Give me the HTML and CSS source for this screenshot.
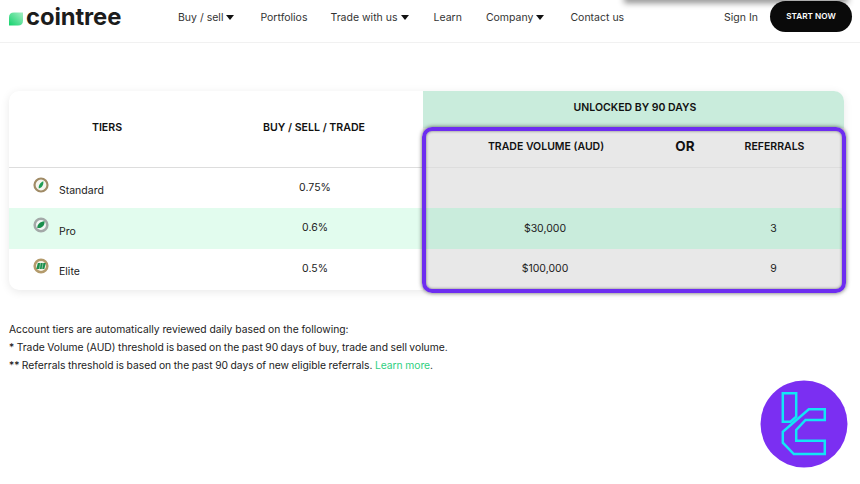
FILE: index.html
```html
<!DOCTYPE html>
<html lang="en">
<head>
<meta charset="utf-8">
<title>Cointree tiers</title>
<link rel="stylesheet" href="styles.css">
</head>
<body>
<header class="nav">
  <a class="logo">
    <svg class="logo-leaf" width="14" height="14" viewBox="0 0 14 14"><defs><linearGradient id="lg" x1="1" y1="0" x2="0" y2="1"><stop offset="0" stop-color="#a5eec4"/><stop offset="1" stop-color="#12d26c"/></linearGradient></defs><path d="M5 0.500H14V8.500Q14 13.500 9 13.500H0V5.500Q0 0.500 5 0.500Z" fill="url(#lg)"/></svg>
    <span class="logo-text">cointree</span>
  </a>
  <nav class="menu">
    <span class="menu-item m-buy">Buy / sell<i class="caret"></i></span>
    <span class="menu-item m-port">Portfolios</span>
    <span class="menu-item m-trade">Trade with us<i class="caret"></i></span>
    <span class="menu-item m-learn">Learn</span>
    <span class="menu-item m-comp">Company<i class="caret"></i></span>
    <span class="menu-item">Contact us</span>
  </nav>
  <span class="signin">Sign In</span>
  <span class="start">START NOW</span>
</header>
<div class="drop-shadow"></div>

<main class="content">
  <section class="tiers">
    <div class="cell head col-a">TIERS</div>
    <div class="cell head col-b">BUY / SELL / TRADE</div>
    <div class="unlocked">UNLOCKED BY 90 DAYS</div>
    <div class="cell sub c-vol">TRADE VOLUME (AUD)</div>
    <div class="cell sub c-or">OR</div>
    <div class="cell sub c-ref">REFERRALS</div>

    <div class="tier"><svg class="medal" width="16" height="16" viewBox="0 0 16 16"><circle cx="8" cy="8" r="6.500" fill="#f6f6f0" stroke="#a08b66" stroke-width="2.200"/><path d="M5.800 11.500C5.200 8.500 7.300 5.500 10.300 4.300C10.800 7.500 9.200 10.800 5.800 11.500Z" fill="#1f9d55"/></svg><span>Standard</span></div>
    <div class="rate">0.75%</div>
    <div class="grey"></div><div class="grey"></div><div class="grey"></div>

    <div class="mint tier"><svg class="medal" width="16" height="16" viewBox="0 0 16 16"><circle cx="8" cy="8" r="6.300" fill="#f2f6f4" stroke="#a3a9a8" stroke-width="2.600"/><path d="M4.300 11C4 7.800 7 4.500 11.500 4.300C12 8.300 9 11.800 4.300 11Z" fill="#1b8f4d"/></svg><span>Pro</span></div>
    <div class="mint rate">0.6%</div>
    <div class="green">$30,000</div><div class="green"></div><div class="green">3</div>

    <div class="tier r-elite"><svg class="medal" width="16" height="16" viewBox="0 0 16 16"><circle cx="8" cy="8" r="6.300" fill="#f6f4e8" stroke="#b39a6b" stroke-width="2.600"/><path d="M3.300 11L4.800 5H12.800L11.300 11Z" fill="#1b8f4d"/><path d="M6.500 11L7.500 5M9 11L10 5" stroke="#f6f4e8" stroke-width=".5"/></svg><span>Elite</span></div>
    <div class="rate">0.5%</div>
    <div class="grey last">$100,000</div><div class="grey"></div><div class="grey last">9</div>

    <div class="highlight"></div>
  </section>

  <div class="notes">
    <p>Account tiers are automatically reviewed daily based on the following:</p>
    <p class="tight">* Trade Volume (AUD) threshold is based on the past 90 days of buy, trade and sell volume.</p>
    <p class="tight">** Referrals threshold is based on the past 90 days of new eligible referrals. <a class="more">Learn more</a>.</p>
  </div>
</main>

<svg class="badge" width="88" height="88" viewBox="0 0 88 88">
  <circle cx="44" cy="44" r="43.500" fill="#7b2ff2"/>
  <path d="M22.800 13.300H36.200V36.700L30.500 41.700H22.800Z" fill="none" stroke="#12e6f5" stroke-width="2.500"/>
  <path d="M48.800 29.300H64.800V40H45.500L36.200 50V60.700H64.800V74H33.800L22.800 62.700V51.700Z" fill="none" stroke="#12e6f5" stroke-width="2.500"/>
</svg>
</body>
</html>
```
FILE: styles.css
```css
* { box-sizing: border-box; }
html, body { margin: 0; height: 484px; overflow: hidden; }
body { background: #fff; font-family: Inter, "Liberation Sans", sans-serif; color: #1a1a1a; position: relative; }

.nav { display: flex; align-items: center; height: 43px; padding: 0 8px 9px 9px; border-bottom: 1px solid #f1f1f1; }
.logo { display: flex; align-items: center; width: 169px; }
.logo-leaf { margin-top: 4px; margin-right: 3px; flex: none; }
.logo-text { font-size: 23.800px; font-weight: 700; letter-spacing: -0.100px; color: #1c1c1c; line-height: 24px; }
.menu { display: flex; align-items: center; font-size: 10.500px; color: #333; padding-top: 1px; }
.menu-item { display: inline-flex; align-items: center; }
.m-buy { margin-right: 26px; }
.m-port { margin-right: 23px; }
.m-trade { margin-right: 25px; }
.m-learn { margin-right: 24px; }
.m-comp { margin-right: 26px; }
.caret { width: 0; height: 0; margin-left: 3px; border-left: 4.500px solid transparent; border-right: 4.500px solid transparent; border-top: 5px solid #111; }
.signin { margin-left: auto; margin-right: 12px; font-size: 10.500px; color: #333; padding-top: 1px; }
.start { display: flex; align-items: center; justify-content: center; width: 82px; height: 31px; padding-bottom: 2px; border-radius: 16px; background: #0a0a0a; color: #fff; font-size: 8.200px; font-weight: 600; }
.drop-shadow { position: absolute; left: 625px; top: -6px; width: 222px; height: 6px; box-shadow: 0 2px 6px 1px rgba(0,0,0,.45); }

.content { padding: 48px 16px 0 9px; }
.tiers { position: relative; display: grid; grid-template-columns: 196px 218px 244px 36px 141px; grid-template-rows: 37px 40px 40px 41px 41px; width: 835px; border-radius: 10px; background: #fff; box-shadow: 0 2px 10px rgba(0,0,0,.09); font-size: 10.500px; color: #222; }
.cell, .rate, .green, .grey { display: flex; align-items: center; justify-content: center; }
.head { grid-row: 1 / span 2; font-weight: 600; font-size: 10.600px; color: #111; padding-bottom: 4px; border-bottom: 1px solid #ddd; }
.col-a { grid-column: 1; }
.col-b { grid-column: 2; }
.unlocked { grid-column: 3 / span 3; grid-row: 1; display: flex; align-items: center; justify-content: center; padding: 0 0 4px 3px; background: #c9ecdc; border-radius: 0 10px 0 0; font-weight: 600; color: #111; }
.sub { background: #e8e8e8; font-weight: 600; color: #111; border-bottom: 1px solid #ddd; padding-bottom: 3px; }
.c-vol, .c-ref { padding-left: 2px; }
.c-or { font-size: 13.500px; font-weight: 700; }
.tier { display: flex; align-items: center; padding-left: 24px; }
.tier span { margin-left: 10px; margin-top: 5px; }
.medal { margin-top: -7px; flex: none; }
.rate { padding: 0 0 2px 2px; }
.grey { background: #e8e8e8; }
.green { background: #c9ecdc; }
.mint { background: #e2fcee; }
.last { padding-bottom: 2px; }
.r-elite { border-bottom-left-radius: 10px; }
.r-elite span { margin-top: 3px; }
.highlight { position: absolute; left: 413px; top: 36px; width: 424px; height: 166px; border: 4px solid #6d2df0; border-radius: 10px; box-shadow: 0 0 4px rgba(0,0,0,.6), inset 0 0 3px rgba(0,0,0,.5); }

.notes { margin-top: 30px; font-size: 10.300px; color: #222; }
.notes p { margin: 0; line-height: 18px; }
.notes .tight { word-spacing: -0.400px; }
.more { color: #2fd07f; }

.badge { position: absolute; left: 759.500px; top: 380px; }
```
